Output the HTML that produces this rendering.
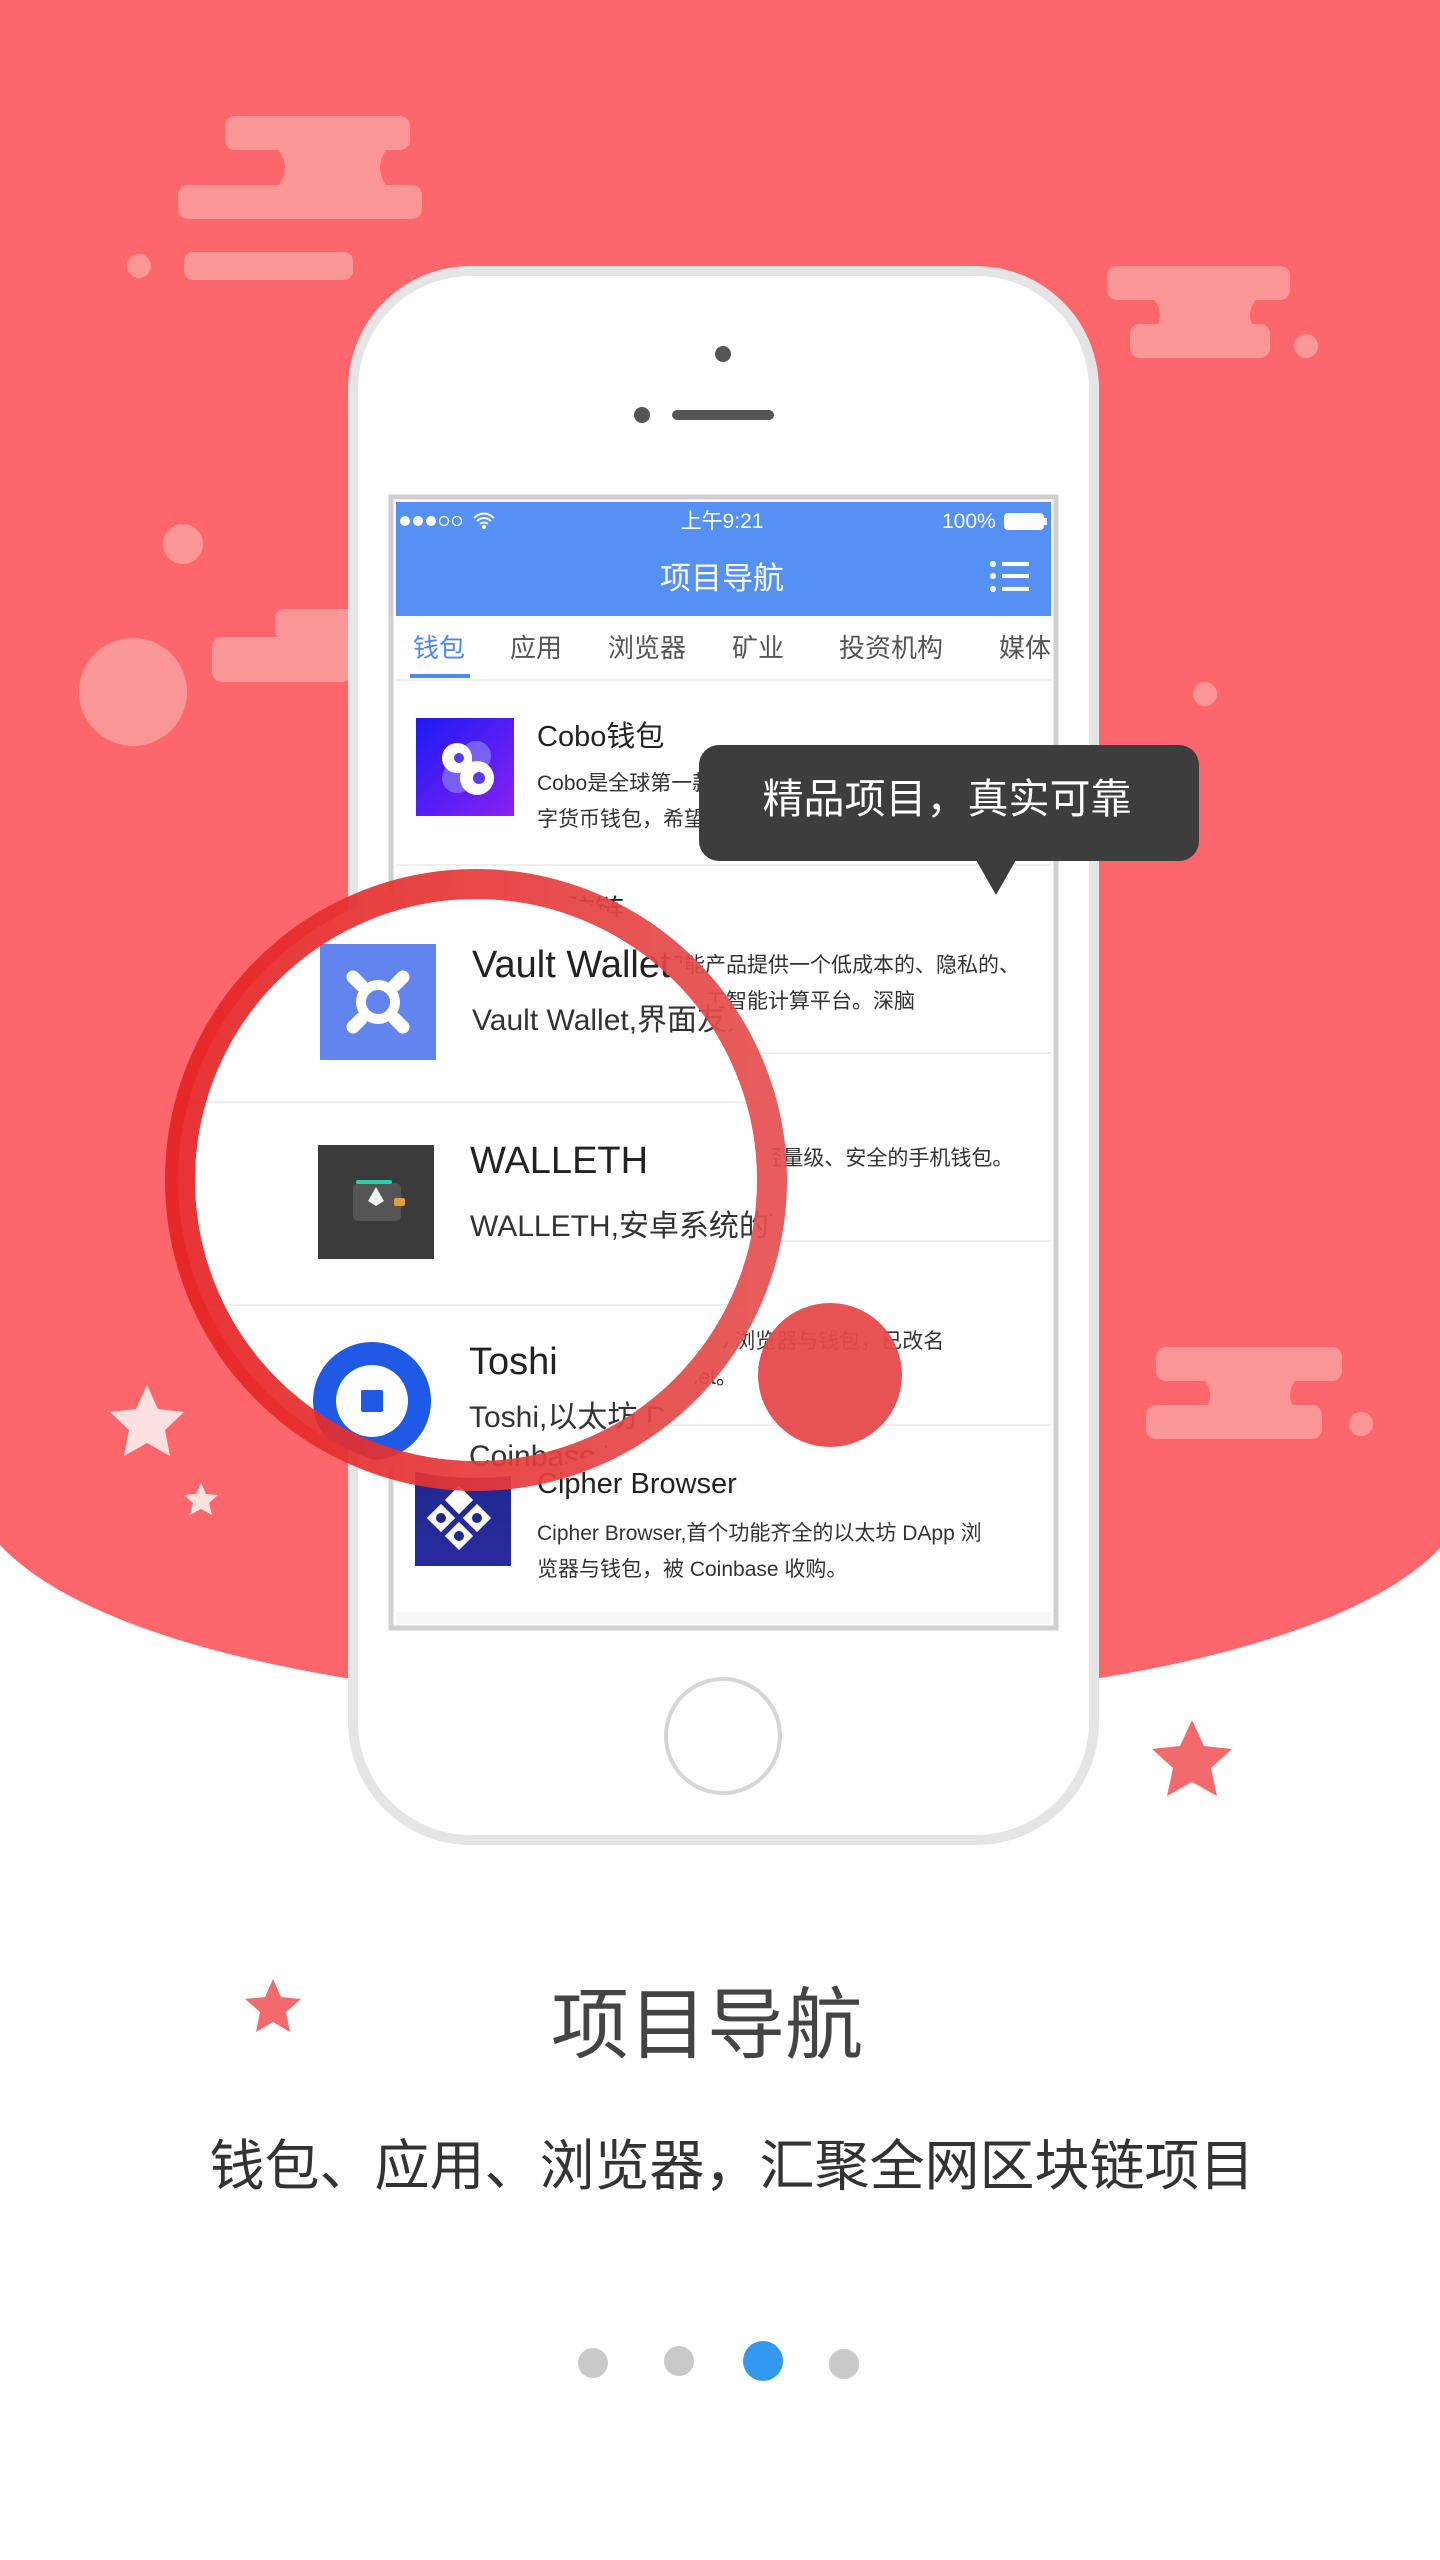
<!DOCTYPE html>
<html><head><meta charset="utf-8">
<style>
html,body{margin:0;padding:0;background:#fff;}
svg{display:block;}
text{font-family:"Liberation Sans","Noto Sans CJK SC",sans-serif;}
</style></head>
<body>
<svg width="1440" height="2560" viewBox="0 0 1440 2560" xmlns="http://www.w3.org/2000/svg">
<defs>
<clipPath id="scr"><rect x="396" y="502" width="655" height="1122"/></clipPath>
<clipPath id="mag"><circle cx="476" cy="1180" r="298"/></clipPath>
<linearGradient id="cobo" x1="0" y1="0" x2="1" y2="1"><stop offset="0" stop-color="#1a1af5"/><stop offset="1" stop-color="#8a22f2"/></linearGradient>
<linearGradient id="ciph" x1="0" y1="0" x2="0" y2="1"><stop offset="0" stop-color="#1b2a8c"/><stop offset="1" stop-color="#2a2aa0"/></linearGradient>
<linearGradient id="ring" x1="0" y1="0" x2="1" y2="0"><stop offset="0" stop-color="#e62222"/><stop offset="1" stop-color="#e54f4f"/></linearGradient>
</defs>
<!-- red bg -->
<path d="M0 0H1440V1548C1240 1760 200 1760 0 1545Z" fill="#fd676b"/>
<!-- decorations -->
<g fill="#fb9697">
<rect x="225" y="116" width="185" height="34" rx="10"/>
<path d="M275 145H390Q370 168 390 190H275Q295 168 275 145Z"/>
<rect x="178" y="185" width="244" height="34" rx="10"/>
<rect x="184" y="252" width="169" height="28" rx="9"/>
<circle cx="139" cy="266" r="12"/>
<circle cx="183" cy="544" r="20"/>
<circle cx="133" cy="692" r="54"/>
<rect x="275" y="609" width="80" height="30" rx="9"/>
<rect x="212" y="637" width="140" height="45" rx="10"/>
<rect x="1107" y="266" width="183" height="34" rx="10"/>
<path d="M1150 295H1260Q1240 315 1260 335H1150Q1170 315 1150 295Z"/>
<rect x="1130" y="324" width="140" height="34" rx="10"/>
<circle cx="1306" cy="346" r="12"/>
<circle cx="1205" cy="694" r="12"/>
<rect x="1156" y="1347" width="186" height="34" rx="10"/>
<path d="M1200 1375H1300Q1280 1395 1300 1415H1200Q1220 1395 1200 1375Z"/>
<rect x="1146" y="1405" width="176" height="34" rx="10"/>
<circle cx="1361" cy="1424" r="12"/>
</g>
<g fill="#fde0e0">
<path d="M147 1385l11 24 26 3-19 18 5 26-23-13-23 13 5-26-19-18 26-3z"/>
<path d="M201 1483l5 11 12 1-9 8 3 12-11-6-11 6 3-12-9-8 12-1z"/>
</g>
<g fill="#f26a6b">
<path d="M1192 1720l12 26 28 3-21 19 6 28-25-14-25 14 6-28-21-19 28-3z"/>
<path d="M273 1979l8 18 20 2-15 13 4 20-17-10-17 10 4-20-15-13 20-2z"/>
</g>
<!-- phone -->
<rect x="353" y="271" width="741" height="1569" rx="118" fill="#fff" stroke="#e5e5e5" stroke-width="10"/>
<circle cx="723" cy="354" r="8" fill="#555"/>
<circle cx="642" cy="415" r="8" fill="#555"/>
<rect x="672" y="410" width="102" height="10" rx="5" fill="#555"/>
<circle cx="723" cy="1736" r="57" fill="#fff" stroke="#d6d6d6" stroke-width="4"/>
<!-- screen -->
<rect x="391" y="497" width="665" height="1131" fill="#fff" stroke="#d0d0d0" stroke-width="5"/>
<g clip-path="url(#scr)">
<rect x="396" y="502" width="655" height="114" fill="#5591f4"/>
<g fill="#fff">
<circle cx="405" cy="521" r="5"/><circle cx="418" cy="521" r="5"/><circle cx="431" cy="521" r="5"/>
</g>
<circle cx="444" cy="521" r="4.5" fill="none" stroke="#fff" stroke-width="1.3"/>
<circle cx="457" cy="521" r="4.5" fill="none" stroke="#fff" stroke-width="1.3"/>
<path d="M474 518q10-9 20 0M477 521q7-6 14 0M480 524q4-3 8 0" stroke="#fff" stroke-width="2" fill="none"/>
<circle cx="484" cy="527" r="2" fill="#fff"/>
<text x="722" y="528" font-size="21" fill="#fff" text-anchor="middle">上午9:21</text>
<text x="942" y="528" font-size="21" fill="#fff">100%</text>
<rect x="1005" y="514" width="38" height="15" rx="3" fill="#fff" stroke="#fff" stroke-width="2"/>
<rect x="1044" y="518" width="3" height="7" fill="#fff"/>
<text x="722" y="589" font-size="31" fill="#fff" text-anchor="middle">项目导航</text>
<g fill="#fff"><circle cx="993" cy="564" r="3"/><circle cx="993" cy="576" r="3"/><circle cx="993" cy="589" r="3"/>
<rect x="1002" y="562" width="27" height="4"/><rect x="1002" y="574" width="27" height="4"/><rect x="1002" y="587" width="27" height="4"/></g>
<g font-size="26" fill="#555">
<text x="413" y="657" fill="#4a8af2">钱包</text>
<text x="510" y="657">应用</text>
<text x="608" y="657">浏览器</text>
<text x="732" y="657">矿业</text>
<text x="839" y="657">投资机构</text>
<text x="999" y="657">媒体</text>
</g>
<rect x="410" y="674" width="60" height="4" fill="#4a8af2"/>
<rect x="396" y="679" width="655" height="2" fill="#f0f0f0"/>
<!-- row Cobo -->
<rect x="416" y="718" width="98" height="98" fill="url(#cobo)"/>
<g fill="#8a7cf8" opacity=".7"><circle cx="476" cy="756" r="15"/><circle cx="457" cy="778" r="15"/></g>
<g fill="#fff"><circle cx="457" cy="758" r="15"/><circle cx="477" cy="778" r="17"/><rect x="452" y="755" width="20" height="8"/></g>
<g fill="#5a3cf0"><circle cx="459" cy="758" r="5"/><circle cx="479" cy="778" r="6"/></g>
<text x="537" y="746" font-size="29" fill="#222">Cobo钱包</text>
<text x="537" y="790" font-size="21" fill="#333">Cobo是全球第一款支持POS的数字</text>
<text x="537" y="826" font-size="21" fill="#333">字货币钱包，希望成为</text>
<rect x="396" y="864" width="655" height="2" fill="#eee"/>
<text x="537" y="920" font-size="29" fill="#222">深脑链</text>
<text x="537" y="972" font-size="21" fill="#333">深脑链为人工智能产品提供一个低成本的、隐私的、</text>
<text x="537" y="1008" font-size="21" fill="#333">灵活的去中心化人工智能计算平台。深脑</text>
<rect x="396" y="1052" width="655" height="2" fill="#eee"/>
<text x="537" y="1120" font-size="29" fill="#222">WALLETH</text>
<text x="537" y="1165" font-size="21" fill="#333">WALLETH，安卓系统的轻量级、安全的手机钱包。</text>
<rect x="396" y="1240" width="655" height="2" fill="#eee"/>
<text x="537" y="1300" font-size="29" fill="#222">Toshi</text>
<text x="537" y="1348" font-size="21" fill="#333">Toshi，以太坊 DApp 浏览器与钱包，已改名</text>
<text x="537" y="1384" font-size="21" fill="#333">为 Coinbase Wallet。</text>
<rect x="396" y="1424" width="655" height="2" fill="#eee"/>
<!-- Cipher -->
<rect x="415" y="1470" width="96" height="96" fill="url(#ciph)"/>
<g fill="#fff"><rect x="449" y="1490" width="20" height="20" transform="rotate(45 459 1500)"/><rect x="431" y="1508" width="20" height="20" transform="rotate(45 441 1518)"/><rect x="467" y="1508" width="20" height="20" transform="rotate(45 477 1518)"/><rect x="449" y="1526" width="20" height="20" transform="rotate(45 459 1536)"/></g>
<g fill="#1b2a8c"><circle cx="441" cy="1518" r="5"/><circle cx="477" cy="1518" r="5"/><circle cx="459" cy="1536" r="5"/></g>
<text x="537" y="1493" font-size="29" fill="#222">Cipher Browser</text>
<text x="537" y="1540" font-size="21" fill="#333">Cipher Browser,首个功能齐全的以太坊 DApp 浏</text>
<text x="537" y="1576" font-size="21" fill="#333">览器与钱包，被 Coinbase 收购。</text>
<rect x="396" y="1612" width="655" height="12" fill="#f6f6f6"/>
</g>
<!-- tooltip -->
<rect x="699" y="745" width="500" height="116" rx="20" fill="#3d3d3d"/>
<path d="M976 860L996 895L1016 860Z" fill="#3d3d3d"/>
<text x="947" y="813" font-size="41" fill="#fff" text-anchor="middle">精品项目，真实可靠</text>
<!-- magnifier -->
<g clip-path="url(#mag)">
<rect x="150" y="850" width="660" height="660" fill="#fff"/>
<rect x="320" y="944" width="116" height="116" fill="#6284ee"/>
<g stroke="#fff" stroke-width="10" fill="none"><circle cx="378" cy="1002" r="17"/></g>
<g stroke="#fff" stroke-width="13" stroke-linecap="round"><path d="M353 977l8 8M403 977l-8 8M353 1027l8-8M403 1027l-8-8"/></g>
<text x="472" y="977" font-size="38" fill="#222">Vault Wallet</text>
<text x="472" y="1030" font-size="30" fill="#333">Vault Wallet,界面友好</text>
<rect x="180" y="1101" width="620" height="2" fill="#eee"/>
<rect x="318" y="1145" width="116" height="114" fill="#3b3b3b"/>
<rect x="353" y="1183" width="48" height="38" rx="5" fill="#555"/>
<rect x="356" y="1180" width="36" height="4" rx="2" fill="#2ad1a0"/>
<path d="M376 1187l-8 14 8 5 8-5z" fill="#eee"/>
<rect x="394" y="1198" width="11" height="8" rx="2" fill="#e0a040"/>
<text x="470" y="1173" font-size="38" fill="#222">WALLETH</text>
<text x="470" y="1236" font-size="30" fill="#333">WALLETH,安卓系统的轻量级</text>
<rect x="180" y="1304" width="620" height="2" fill="#eee"/>
<circle cx="372" cy="1401" r="59" fill="#1f5ae6"/>
<circle cx="372" cy="1401" r="36" fill="#fff"/>
<rect x="361" y="1390" width="22" height="22" rx="2" fill="#1f5ae6"/>
<text x="469" y="1374" font-size="38" fill="#222">Toshi</text>
<text x="469" y="1427" font-size="30" fill="#333">Toshi,以太坊 DApp</text>
<text x="469" y="1466" font-size="30" fill="#333">Coinbase Wallet</text>
</g>
<circle cx="476" cy="1180" r="296" fill="none" stroke="url(#ring)" stroke-width="30" opacity=".92"/>
<circle cx="830" cy="1375" r="72" fill="#e64a4c" opacity=".95"/>
<!-- bottom text -->
<text x="707" y="2052" font-size="78" fill="#444" text-anchor="middle">项目导航</text>
<text x="732" y="2185" font-size="55" fill="#333" text-anchor="middle">钱包、应用、浏览器，汇聚全网区块链项目</text>
<circle cx="593" cy="2363" r="15" fill="#c9c9c9"/>
<circle cx="679" cy="2361" r="15" fill="#c9c9c9"/>
<circle cx="763" cy="2361" r="20" fill="#3399f0"/>
<circle cx="844" cy="2364" r="15" fill="#c9c9c9"/>
</svg>
</body></html>
